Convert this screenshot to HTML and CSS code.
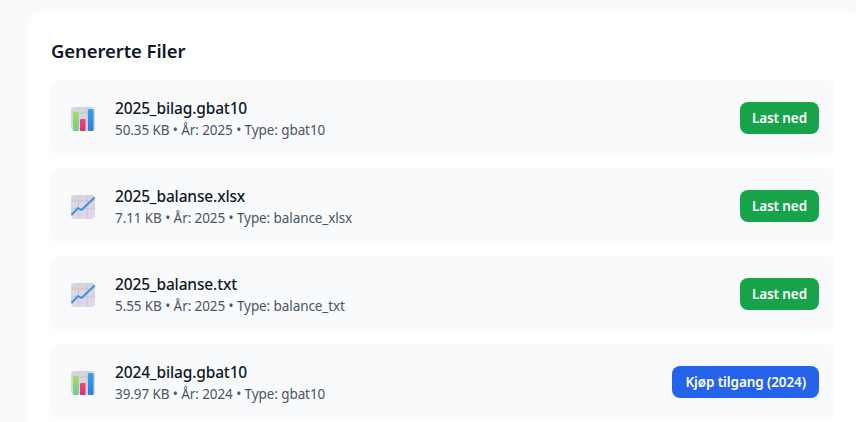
FILE: index.html
```html
<!DOCTYPE html>
<html lang="no">
<head>
    <meta charset="UTF-8">
    <title>Genererte Filer</title>
    <link rel="stylesheet" href="styles.css">
</head>
<body>
    <svg class="sprites" width="0" height="0">
        <defs>
            <linearGradient id="sheet" x1="0" y1="0" x2="0" y2="1">
                <stop offset="0" stop-color="#d8d4dc"/>
                <stop offset="1" stop-color="#e0d8ea"/>
            </linearGradient>
            <linearGradient id="barGreen" x1="0" y1="0" x2="0" y2="1">
                <stop offset="0" stop-color="#a5dc5c"/>
                <stop offset="1" stop-color="#5cd888"/>
            </linearGradient>
            <linearGradient id="barPink" x1="0" y1="0" x2="0" y2="1">
                <stop offset="0" stop-color="#f0447c"/>
                <stop offset="1" stop-color="#e02c78"/>
            </linearGradient>
            <linearGradient id="barBlue" x1="0" y1="0" x2="0" y2="1">
                <stop offset="0" stop-color="#2aa5f0"/>
                <stop offset="1" stop-color="#3078dc"/>
            </linearGradient>
            <symbol id="grid" viewBox="0 0 24 24">
                <rect width="24" height="24" rx="4" fill="url(#sheet)"/>
                <path d="M7.500 0v24M16 0v24M0 6h24M0 14h24" stroke="#c9c3d2" stroke-width="1" fill="none"/>
            </symbol>
            <symbol id="barChart" viewBox="0 0 24 24">
                <use href="#grid" width="24" height="24"/>
                <rect x="2" y="5" width="5.500" height="19" rx="1" fill="url(#barGreen)"/>
                <rect x="9" y="12" width="5.500" height="12" rx="1" fill="url(#barPink)"/>
                <rect x="17" y="2" width="5.500" height="22" rx="1" fill="url(#barBlue)"/>
            </symbol>
            <symbol id="lineChart" viewBox="0 0 24 24">
                <use href="#grid" width="24" height="24"/>
                <path d="M0.500 20 L7 13 L10.500 15 L23.500 2.500" stroke="#3c94e4" stroke-width="2" fill="none" stroke-linejoin="round"/>
            </symbol>
        </defs>
    </svg>

    <div class="card">
        <h2>Genererte Filer</h2>
        <div class="file-list">
            <div class="file-row">
                <svg class="file-icon"><use href="#barChart"/></svg>
                <div class="file-info">
                    <div class="file-name">2025_bilag.gbat10</div>
                    <div class="file-meta">50.35 KB • År: 2025 • Type: gbat10</div>
                </div>
                <a class="btn btn-download" href="#">Last ned</a>
            </div>
            <div class="file-row">
                <svg class="file-icon"><use href="#lineChart"/></svg>
                <div class="file-info">
                    <div class="file-name">2025_balanse.xlsx</div>
                    <div class="file-meta">7.11 KB • År: 2025 • Type: balance_xlsx</div>
                </div>
                <a class="btn btn-download" href="#">Last ned</a>
            </div>
            <div class="file-row">
                <svg class="file-icon"><use href="#lineChart"/></svg>
                <div class="file-info">
                    <div class="file-name">2025_balanse.txt</div>
                    <div class="file-meta">5.55 KB • År: 2025 • Type: balance_txt</div>
                </div>
                <a class="btn btn-download" href="#">Last ned</a>
            </div>
            <div class="file-row">
                <svg class="file-icon"><use href="#barChart"/></svg>
                <div class="file-info">
                    <div class="file-name">2024_bilag.gbat10</div>
                    <div class="file-meta">39.97 KB • År: 2024 • Type: gbat10</div>
                </div>
                <a class="btn btn-buy" href="#">Kjøp tilgang (2024)</a>
            </div>
        </div>
    </div>
</body>
</html>
```

FILE: styles.css
```css
* {
    margin: 0;
    padding: 0;
    box-sizing: border-box;
}

html, body {
    height: 100%;
    overflow: hidden;
}

body {
    background: #f9fafb;
    font-family: "Noto Sans", sans-serif;
    color: #111827;
    padding: 12px 0 0 27px;
}

.sprites {
    position: absolute;
}

.card {
    width: 832px;
    height: 410px;
    overflow: hidden;
    background: #fff;
    border-radius: 12px 12px 0 0;
    padding: 25px 24px 0;
    box-shadow: 0 1px 2px rgba(0, 0, 0, 0.05);
}

.card h2 {
    font-size: 18.500px;
    font-weight: 600;
    line-height: 28px;
    letter-spacing: -0.1px;
    margin-bottom: 15px;
}

.file-list {
    display: flex;
    flex-direction: column;
    gap: 12px;
}

.file-row {
    display: flex;
    align-items: center;
    height: 76px;
    padding: 0 16px 0 20px;
    background: #f9fafb;
    border-radius: 8px;
}

.file-icon {
    width: 24px;
    height: 24px;
    margin: 2px 20px 0 0;
    flex-shrink: 0;
}

.file-info {
    flex: 1;
}

.file-name {
    font-size: 15.500px;
    font-weight: 500;
    line-height: 24px;
    letter-spacing: -0.15px;
}

.file-meta {
    font-size: 13.500px;
    line-height: 20px;
    letter-spacing: -0.09px;
    color: #4b5563;
}

.btn {
    display: block;
    height: 32px;
    line-height: 32px;
    border-radius: 8px;
    color: #fff;
    font-size: 13.500px;
    font-weight: 600;
    letter-spacing: -0.1px;
    text-decoration: none;
}

.btn-download {
    padding: 0 12px;
    background: #16a34a;
}

.btn-buy {
    padding: 0 13px;
    background: #2563eb;
}
```
